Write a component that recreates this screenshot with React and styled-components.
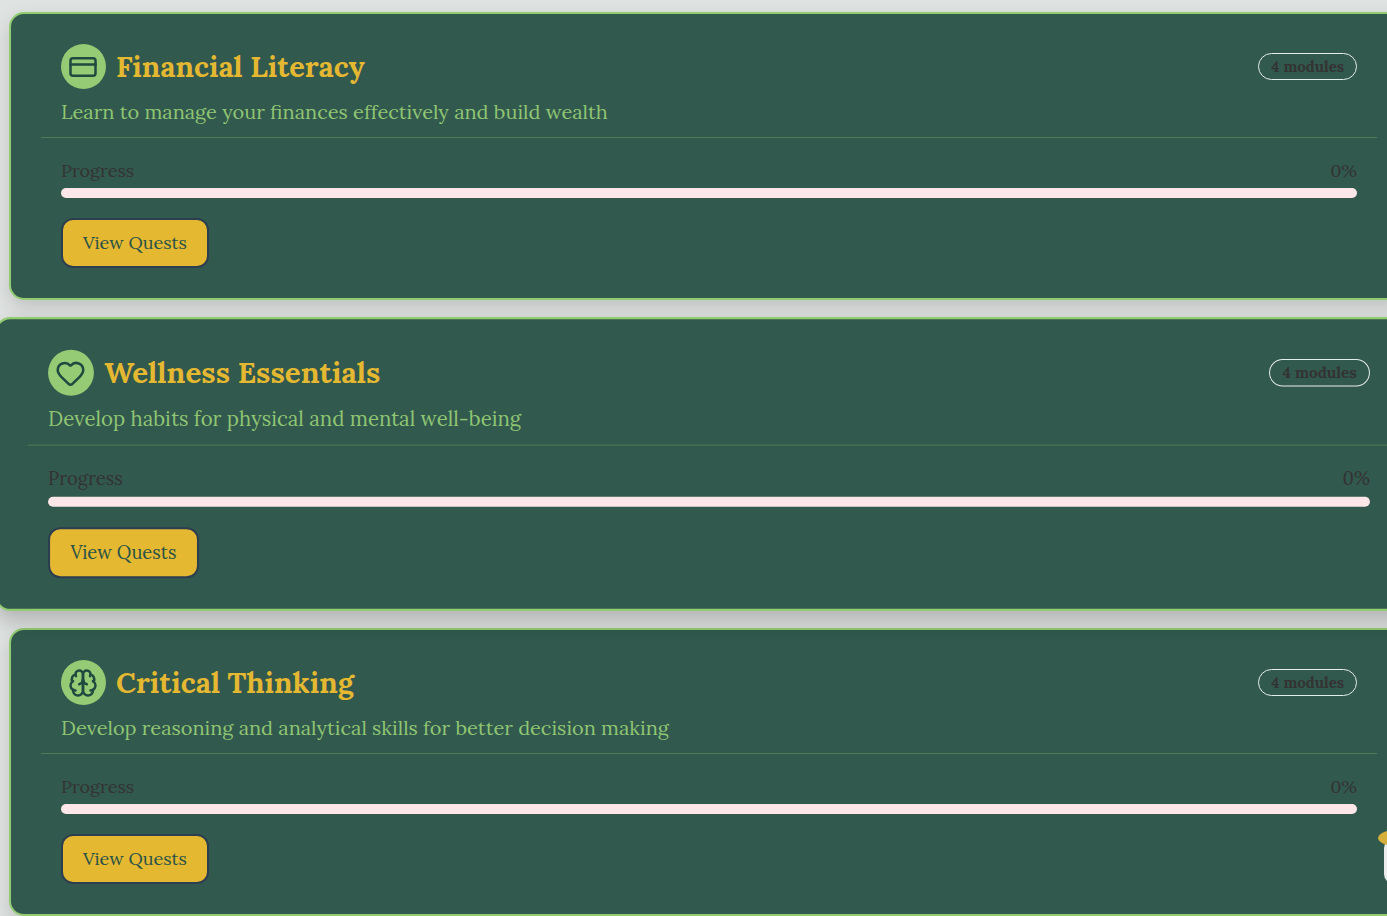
import React from "react";
import styled, { createGlobalStyle, css } from "styled-components";
import { CreditCard, Heart } from "lucide-react";

const GlobalStyle = createGlobalStyle`
  *, *::before, *::after {
    box-sizing: border-box;
  }
  html, body {
    margin: 0;
    overflow-x: hidden;
  }
  html {
    scrollbar-width: none;
  }
  body {
    background: #dfe3e2;
    color: #333333;
    font-family: "Lora", "Liberation Serif", serif;
  }
`;

const QuestList = styled.main`
  display: flex;
  flex-direction: column;
  gap: 20px;
  padding: 12px 0 20px 9px;
  margin-right: -22px;
`;

const Card = styled.article`
  padding: 30px;
  border: 2px solid #92cb70;
  border-radius: 15px;
  background: #32594d;
  box-shadow: 0 8px 20px rgba(0, 0, 0, 0.15);
  ${({ $raised }) =>
    $raised &&
    css`
      transform: scale(1.02);
      box-shadow: 0 10px 20px rgba(0, 0, 0, 0.2);
    `}
`;

const CardHeader = styled.header`
  padding: 0 20px 10px;
  border-bottom: 1px solid #4d7d59;
`;

const TitleRow = styled.div`
  display: flex;
  align-items: center;
  gap: 10px;
`;

const IconDisc = styled.span`
  flex: none;
  width: 45px;
  height: 45px;
  padding: 8px 7px;
  border-radius: 50%;
  background: #95cb75;
  color: #1f4a40;

  svg {
    display: block;
  }
`;

const Title = styled.h2`
  flex: 1;
  margin: 0;
  color: #e4b831;
  font-size: 29px;
  line-height: 45px;
  font-weight: 700;
`;

const Badge = styled.span`
  padding: 0 12px;
  border: 1px solid #e6ecea;
  border-radius: 14px;
  font-size: 15px;
  line-height: 25px;
  font-weight: 700;
`;

const Summary = styled.p`
  margin: 8px 0 0;
  color: #8fc573;
  font-size: 20px;
  line-height: 30px;
`;

const CardBody = styled.div`
  padding: 20px 20px 0;
`;

const ProgressLabel = styled.div`
  display: flex;
  justify-content: space-between;
  margin-bottom: 4px;
  font-size: 18px;
  line-height: 26px;
`;

const Track = styled.div`
  height: 10px;
  border-radius: 5px;
  background: #ffe6e8;
  overflow: hidden;
`;

const Fill = styled.div`
  height: 100%;
  background: #e4b831;
`;

const QuestButton = styled.button`
  display: block;
  height: 50px;
  margin-top: 20px;
  padding: 0 20px;
  border: 2px solid #2c3e50;
  border-radius: 12px;
  background: #e4b831;
  color: #2a5246;
  font-family: inherit;
  font-size: 18px;
  line-height: 26px;
  cursor: pointer;
`;

const Mascot = styled.svg`
  position: fixed;
  right: -51px;
  bottom: 30px;
`;

function BrainIcon({ size, strokeWidth }) {
  return (
    <svg
      width={size}
      height={size}
      viewBox="0 0 24 24"
      fill="none"
      stroke="currentColor"
      strokeWidth={strokeWidth}
      strokeLinecap="round"
      strokeLinejoin="round"
      aria-hidden="true"
    >
      <path d="M12 5a3 3 0 1 0-5.997.125 4 4 0 0 0-2.526 5.77 4 4 0 0 0 .556 6.588A4 4 0 1 0 12 18Z" />
      <path d="M12 5a3 3 0 1 1 5.997.125 4 4 0 0 1 2.526 5.77 4 4 0 0 1-.556 6.588A4 4 0 1 1 12 18Z" />
      <path d="M15 13a4.5 4.5 0 0 1-3-4 4.5 4.5 0 0 1-3 4" />
      <path d="M17.599 6.5a3 3 0 0 0 .399-1.375" />
      <path d="M6.003 5.125A3 3 0 0 0 6.401 6.5" />
      <path d="M3.477 10.896a4 4 0 0 1 .585-.396" />
      <path d="M19.938 10.5a4 4 0 0 1 .585.396" />
      <path d="M6 18a4 4 0 0 1-1.967-.516" />
      <path d="M19.967 17.484A4 4 0 0 1 18 18" />
    </svg>
  );
}

const tracks = [
  {
    id: "finance",
    icon: CreditCard,
    title: "Financial Literacy",
    summary: "Learn to manage your finances effectively and build wealth",
    modules: 4,
    progress: 0,
  },
  {
    id: "wellness",
    icon: Heart,
    title: "Wellness Essentials",
    summary: "Develop habits for physical and mental well-being",
    modules: 4,
    progress: 0,
    raised: true,
  },
  {
    id: "thinking",
    icon: BrainIcon,
    title: "Critical Thinking",
    summary: "Develop reasoning and analytical skills for better decision making",
    modules: 4,
    progress: 0,
  },
];

function QuestCard({ id, icon: Icon, title, summary, modules, progress, raised }) {
  return (
    <Card $raised={raised}>
      <CardHeader>
        <TitleRow>
          <IconDisc>
            <Icon size={30} strokeWidth={2} aria-hidden="true" />
          </IconDisc>
          <Title>{title}</Title>
          <Badge>{modules} modules</Badge>
        </TitleRow>
        <Summary>{summary}</Summary>
      </CardHeader>
      <CardBody>
        <ProgressLabel>
          <span id={`${id}-progress`}>Progress</span>
          <span>{progress}%</span>
        </ProgressLabel>
        <Track
          role="progressbar"
          aria-labelledby={`${id}-progress`}
          aria-valuenow={progress}
          aria-valuemin={0}
          aria-valuemax={100}
        >
          <Fill style={{ width: `${progress}%` }} />
        </Track>
        <QuestButton type="button">View Quests</QuestButton>
      </CardBody>
    </Card>
  );
}

export default function App() {
  return (
    <>
      <GlobalStyle />
      <QuestList>
        {tracks.map((track) => (
          <QuestCard key={track.id} {...track} />
        ))}
      </QuestList>
      <Mascot width="60" height="56" viewBox="0 0 60 56" aria-hidden="true">
        <rect x="6" y="8" width="48" height="46" rx="10" fill="#ececec" />
        <ellipse cx="30" cy="8" rx="30" ry="10" fill="#d6b03a" />
      </Mascot>
    </>
  );
}
